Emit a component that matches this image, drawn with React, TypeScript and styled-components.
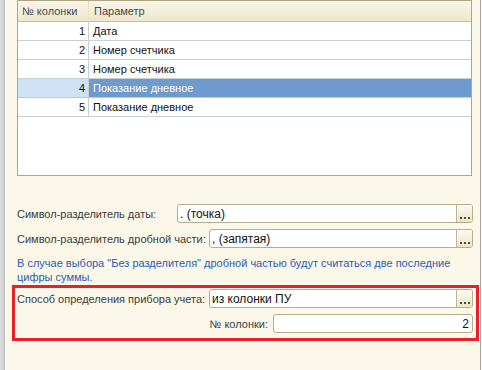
import styled, { createGlobalStyle } from "styled-components";

const GlobalStyle = createGlobalStyle`
  html, body {
    margin: 0;
    padding: 0;
    width: 482px;
    height: 370px;
    overflow: hidden;
  }
  body {
    font-family: "Liberation Sans", Arial, sans-serif;
    font-size: 11px;
    color: #333;
  }
`;

const Window = styled.div`
  display: flex;
  width: 482px;
  height: 370px;
  background: #fbf8e9;
`;

const LeftStrip = styled.div`
  width: 5px;
  flex: none;
  background: linear-gradient(to right, #dedede, #d2d2d2 60%, #bdbdbd);
`;

const RightEdge = styled.div`
  width: 1px;
  flex: none;
  background: #a9a9a9;
  margin-right: 1px;
`;

const Main = styled.div`
  flex: 1;
  display: flex;
  flex-direction: column;
  padding: 0 1px 0 7px;
`;

const Table = styled.div`
  margin: 0 7px 0 5px;
  height: 176px;
  box-sizing: border-box;
  border: 1px solid #aea67f;
  background: #fff;
  display: flex;
  flex-direction: column;
`;

const HeaderRow = styled.div`
  display: grid;
  grid-template-columns: 71px 1fr;
  height: 21px;
  box-sizing: border-box;
  border-bottom: 1px solid #c7bf98;
  background: linear-gradient(to bottom, #f8f7ee, #efe7c9);
  color: #4a4a4a;
`;

const HeaderCell = styled.div<{ $first?: boolean }>`
  display: flex;
  align-items: center;
  padding-left: ${(p) => (p.$first ? "4px" : "5px")};
  border-right: ${(p) => (p.$first ? "1px solid #e8e2c8" : "none")};
`;

const Row = styled.div<{ $selected?: boolean }>`
  display: grid;
  grid-template-columns: 71px 1fr;
  height: 19px;
  box-sizing: border-box;
  border-bottom: 1px solid ${(p) => (p.$selected ? "#b3cbe4" : "#c9d0d3")};
  color: #111;
`;

const NumCell = styled.div<{ $selected?: boolean }>`
  display: flex;
  align-items: center;
  justify-content: flex-end;
  padding-right: 3px;
  border-right: 1px solid #c9d0d3;
  background: ${(p) => (p.$selected ? "#cde2f7" : "transparent")};
`;

const ParamCell = styled.div<{ $selected?: boolean }>`
  display: flex;
  align-items: center;
  padding-left: 4px;
  background: ${(p) => (p.$selected ? "#6f9acf" : "transparent")};
  color: ${(p) => (p.$selected ? "#fff" : "#111")};
`;

const FieldRow = styled.div<{ $top: number; $end?: boolean; $inset?: boolean }>`
  display: flex;
  align-items: center;
  justify-content: ${(p) => (p.$end ? "flex-end" : "flex-start")};
  margin: ${(p) => (p.$inset ? `${p.$top}px 3px 0 2px` : `${p.$top}px 6px 0 5px`)};
  height: 19px;
`;

const Label = styled.div<{ $width?: number }>`
  flex: none;
  width: ${(p) => (p.$width ? `${p.$width}px` : "auto")};
  margin-right: ${(p) => (p.$width ? "0" : "5px")};
  color: #3c3c3c;
  white-space: nowrap;
`;

const InputBox = styled.div<{ $width?: number }>`
  display: flex;
  height: 19px;
  box-sizing: border-box;
  flex: ${(p) => (p.$width ? "none" : "1")};
  width: ${(p) => (p.$width ? `${p.$width}px` : "auto")};
  border: 1px solid #b4ac8d;
  border-radius: 3px;
  background: #fff;
  overflow: hidden;
`;

const InputText = styled.div<{ $right?: boolean }>`
  flex: 1;
  display: flex;
  align-items: center;
  justify-content: ${(p) => (p.$right ? "flex-end" : "flex-start")};
  padding: 0 3px 0 2px;
  color: #111;
  font-size: 12px;
`;

const DotsButton = styled.div`
  width: 16px;
  flex: none;
  border-left: 1px solid #bdb595;
  background: linear-gradient(to bottom, #fbfaf2, #ede5c5);
  display: flex;
  align-items: flex-end;
  justify-content: center;
  padding-bottom: 3px;
  box-sizing: border-box;
  gap: 2px;
`;

const Dot = styled.span`
  width: 2px;
  height: 2px;
  background: #4a4a4a;
`;

const Hint = styled.div`
  margin: 8px 6px 0 5px;
  color: #2a5cb5;
  line-height: 14px;
`;

const Highlight = styled.div`
  margin-top: 1px;
  height: 56px;
  box-sizing: border-box;
  border: 3px solid #e8202c;
  padding-top: 1px;
  display: flex;
  flex-direction: column;
`;

const Dots = () => (
  <DotsButton>
    <Dot />
    <Dot />
    <Dot />
  </DotsButton>
);

const rows = [
  { n: 1, name: "Дата" },
  { n: 2, name: "Номер счетчика" },
  { n: 3, name: "Номер счетчика" },
  { n: 4, name: "Показание дневное", selected: true },
  { n: 5, name: "Показание дневное" },
];

const App = () => {
  return (
    <>
      <GlobalStyle />
      <Window>
        <LeftStrip />
        <Main>
          <Table>
            <HeaderRow>
              <HeaderCell $first>№ колонки</HeaderCell>
              <HeaderCell>Параметр</HeaderCell>
            </HeaderRow>
            {rows.map((r) => (
              <Row key={r.n} $selected={r.selected}>
                <NumCell $selected={r.selected}>{r.n}</NumCell>
                <ParamCell $selected={r.selected}>{r.name}</ParamCell>
              </Row>
            ))}
          </Table>

          <FieldRow $top={28}>
            <Label $width={160}>Символ-разделитель даты:</Label>
            <InputBox>
              <InputText>. (точка)</InputText>
              <Dots />
            </InputBox>
          </FieldRow>

          <FieldRow $top={6}>
            <Label $width={192}>Символ-разделитель дробной части:</Label>
            <InputBox>
              <InputText>, (запятая)</InputText>
              <Dots />
            </InputBox>
          </FieldRow>

          <Hint>
            В случае выбора "Без разделителя" дробной частью будут считаться две последние
            <br />
            цифры суммы.
          </Hint>

          <Highlight>
            <FieldRow $top={0} $inset>
              <Label $width={192}>Способ определения прибора учета:</Label>
              <InputBox>
                <InputText>из колонки ПУ</InputText>
                <Dots />
              </InputBox>
            </FieldRow>
            <FieldRow $top={6} $end $inset>
              <Label>№ колонки:</Label>
              <InputBox $width={200}>
                <InputText $right>2</InputText>
              </InputBox>
            </FieldRow>
          </Highlight>
        </Main>
        <RightEdge />
      </Window>
    </>
  );
};

export default App;
